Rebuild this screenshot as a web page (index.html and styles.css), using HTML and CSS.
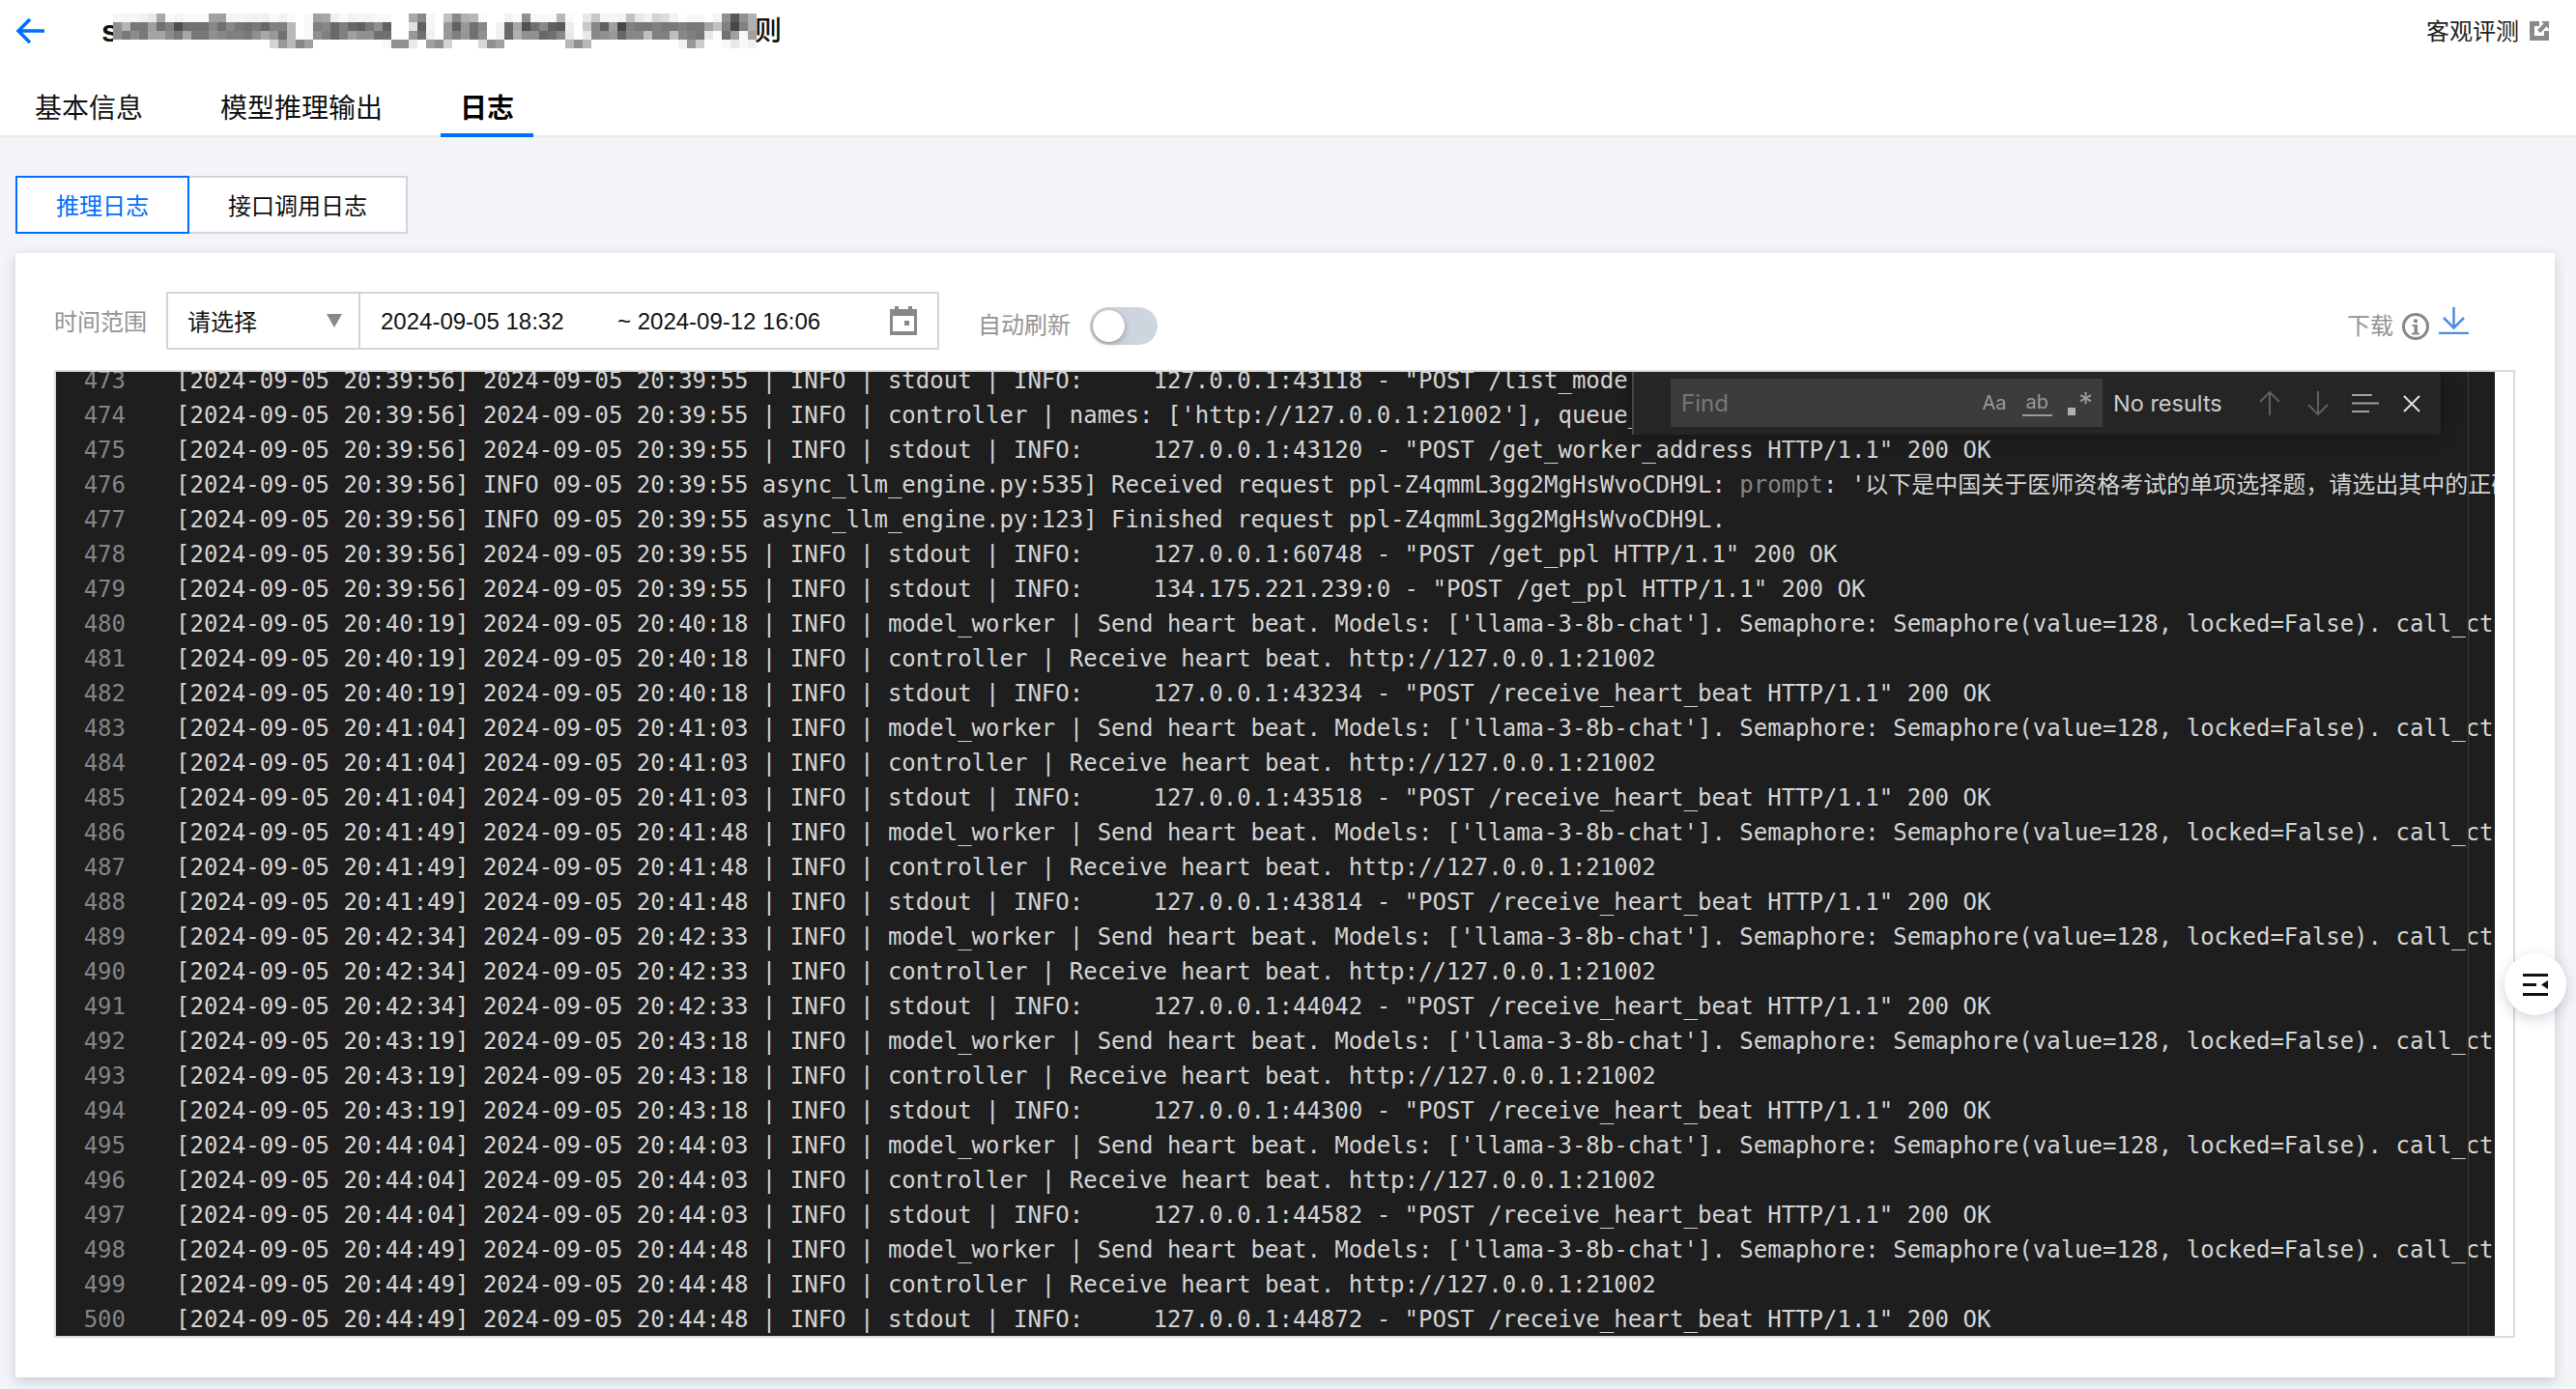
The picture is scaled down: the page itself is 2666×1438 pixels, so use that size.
FILE: index.html
```html
<!DOCTYPE html>
<html lang="zh">
<head>
<meta charset="utf-8">
<title>日志</title>
<link rel="stylesheet" href="styles.css">
</head>
<body>
<header class="header">
  <div class="topbar">
    <svg class="back" width="30" height="28" viewBox="0 0 30 28"><path d="M15 2 3 14l12 12M3 14h27" fill="none" stroke="#006eff" stroke-width="3.5"/></svg>
    <div class="title"><span class="title-s">s</span><svg class="mosaic" width="666" height="36" viewBox="0 0 666 36">
      <g>
      <rect x="0" y="0" fill="#f6f6f6"/><rect x="9" y="0" fill="#f6f6f6"/><rect x="18" y="0" fill="#f6f6f6"/><rect x="27" y="0" fill="#f0f0f0"/><rect x="36" y="0" fill="#e8e8e8"/><rect x="45" y="0" fill="#a8a8a8"/><rect x="54" y="0" fill="#fafafa"/><rect x="63" y="0" fill="#f5f5f5"/><rect x="72" y="0" fill="#f8f8f8"/><rect x="81" y="0" fill="#f8f8f8"/><rect x="90" y="0" fill="#f8f8f8"/><rect x="99" y="0" fill="#a0a0a0"/><rect x="108" y="0" fill="#a0a0a0"/><rect x="117" y="0" fill="#f5f5f5"/><rect x="126" y="0" fill="#f5f5f5"/><rect x="135" y="0" fill="#f2f2f2"/><rect x="144" y="0" fill="#f2f2f2"/><rect x="153" y="0" fill="#f0f0f0"/><rect x="162" y="0" fill="#fafafa"/><rect x="171" y="0" fill="#f2f2f2"/><rect x="180" y="0" fill="#fafafa"/><rect x="198" y="0" fill="#f8f8f8"/><rect x="207" y="0" fill="#a0a0a0"/><rect x="216" y="0" fill="#a8a8a8"/><rect x="225" y="0" fill="#f0f0f0"/><rect x="234" y="0" fill="#fafafa"/><rect x="243" y="0" fill="#f2f2f2"/><rect x="252" y="0" fill="#f5f5f5"/><rect x="261" y="0" fill="#f5f5f5"/><rect x="270" y="0" fill="#f8f8f8"/><rect x="279" y="0" fill="#f8f8f8"/><rect x="306" y="0" fill="#a8a8a8"/><rect x="315" y="0" fill="#888888"/><rect x="324" y="0" fill="#f8f8f8"/><rect x="342" y="0" fill="#c0c0c0"/><rect x="351" y="0" fill="#888888"/><rect x="360" y="0" fill="#b0b0b0"/><rect x="369" y="0" fill="#b8b8b8"/><rect x="378" y="0" fill="#fafafa"/><rect x="405" y="0" fill="#f2f2f2"/><rect x="414" y="0" fill="#fafafa"/><rect x="423" y="0" fill="#909090"/><rect x="432" y="0" fill="#f8f8f8"/><rect x="441" y="0" fill="#f8f8f8"/><rect x="450" y="0" fill="#f8f8f8"/><rect x="459" y="0" fill="#b8b8b8"/><rect x="468" y="0" fill="#fafafa"/><rect x="486" y="0" fill="#e8e8e8"/><rect x="495" y="0" fill="#c8c8c8"/><rect x="504" y="0" fill="#f5f5f5"/><rect x="513" y="0" fill="#f5f5f5"/><rect x="522" y="0" fill="#f2f2f2"/><rect x="531" y="0" fill="#c0c0c0"/><rect x="540" y="0" fill="#e8e8e8"/><rect x="549" y="0" fill="#f2f2f2"/><rect x="558" y="0" fill="#d4d4d4"/><rect x="567" y="0" fill="#dcdcdc"/><rect x="576" y="0" fill="#f2f2f2"/><rect x="594" y="0" fill="#f8f8f8"/><rect x="603" y="0" fill="#f8f8f8"/><rect x="621" y="0" fill="#f5f5f5"/><rect x="630" y="0" fill="#909090"/><rect x="639" y="0" fill="#585858"/><rect x="648" y="0" fill="#909090"/><rect x="657" y="0" fill="#b0b0b0"/>
      </g>
      <g>
      <rect x="0" y="9" fill="#909090"/><rect x="9" y="9" fill="#b4b4b4"/><rect x="18" y="9" fill="#787878"/><rect x="27" y="9" fill="#787878"/><rect x="36" y="9" fill="#a0a0a0"/><rect x="45" y="9" fill="#707070"/><rect x="54" y="9" fill="#808080"/><rect x="63" y="9" fill="#505050"/><rect x="72" y="9" fill="#707070"/><rect x="81" y="9" fill="#707070"/><rect x="90" y="9" fill="#707070"/><rect x="99" y="9" fill="#888888"/><rect x="108" y="9" fill="#707070"/><rect x="117" y="9" fill="#888888"/><rect x="126" y="9" fill="#787878"/><rect x="135" y="9" fill="#707070"/><rect x="144" y="9" fill="#787878"/><rect x="153" y="9" fill="#686868"/><rect x="162" y="9" fill="#808080"/><rect x="171" y="9" fill="#808080"/><rect x="180" y="9" fill="#b8b8b8"/><rect x="198" y="9" fill="#f8f8f8"/><rect x="207" y="9" fill="#808080"/><rect x="216" y="9" fill="#888888"/><rect x="225" y="9" fill="#686868"/><rect x="234" y="9" fill="#808080"/><rect x="243" y="9" fill="#686868"/><rect x="252" y="9" fill="#606060"/><rect x="261" y="9" fill="#787878"/><rect x="270" y="9" fill="#909090"/><rect x="279" y="9" fill="#606060"/><rect x="306" y="9" fill="#e0e0e0"/><rect x="315" y="9" fill="#606060"/><rect x="324" y="9" fill="#f5f5f5"/><rect x="342" y="9" fill="#989898"/><rect x="351" y="9" fill="#606060"/><rect x="360" y="9" fill="#989898"/><rect x="369" y="9" fill="#707070"/><rect x="378" y="9" fill="#888888"/><rect x="396" y="9" fill="#f2f2f2"/><rect x="405" y="9" fill="#686868"/><rect x="414" y="9" fill="#a8a8a8"/><rect x="423" y="9" fill="#505050"/><rect x="432" y="9" fill="#707070"/><rect x="441" y="9" fill="#888888"/><rect x="450" y="9" fill="#606060"/><rect x="459" y="9" fill="#585858"/><rect x="468" y="9" fill="#eeeeee"/><rect x="486" y="9" fill="#c8c8c8"/><rect x="495" y="9" fill="#888888"/><rect x="504" y="9" fill="#606060"/><rect x="513" y="9" fill="#a0a0a0"/><rect x="522" y="9" fill="#484848"/><rect x="531" y="9" fill="#808080"/><rect x="540" y="9" fill="#787878"/><rect x="549" y="9" fill="#787878"/><rect x="558" y="9" fill="#808080"/><rect x="567" y="9" fill="#787878"/><rect x="576" y="9" fill="#787878"/><rect x="585" y="9" fill="#808080"/><rect x="594" y="9" fill="#787878"/><rect x="603" y="9" fill="#787878"/><rect x="612" y="9" fill="#a4a4a4"/><rect x="621" y="9" fill="#c0c0c0"/><rect x="630" y="9" fill="#808080"/><rect x="639" y="9" fill="#484848"/><rect x="648" y="9" fill="#808080"/><rect x="657" y="9" fill="#b0b0b0"/>
      </g>
      <g>
      <rect x="0" y="18" fill="#909090"/><rect x="9" y="18" fill="#787878"/><rect x="18" y="18" fill="#8c8c8c"/><rect x="27" y="18" fill="#787878"/><rect x="36" y="18" fill="#a4a4a4"/><rect x="45" y="18" fill="#a4a4a4"/><rect x="54" y="18" fill="#8c8c8c"/><rect x="63" y="18" fill="#787878"/><rect x="72" y="18" fill="#a8a8a8"/><rect x="81" y="18" fill="#787878"/><rect x="90" y="18" fill="#787878"/><rect x="99" y="18" fill="#909090"/><rect x="108" y="18" fill="#888888"/><rect x="117" y="18" fill="#808080"/><rect x="126" y="18" fill="#808080"/><rect x="135" y="18" fill="#787878"/><rect x="144" y="18" fill="#909090"/><rect x="153" y="18" fill="#a8a8a8"/><rect x="162" y="18" fill="#989898"/><rect x="171" y="18" fill="#707070"/><rect x="180" y="18" fill="#b8b8b8"/><rect x="198" y="18" fill="#f8f8f8"/><rect x="207" y="18" fill="#909090"/><rect x="216" y="18" fill="#808080"/><rect x="225" y="18" fill="#686868"/><rect x="234" y="18" fill="#808080"/><rect x="243" y="18" fill="#a0a0a0"/><rect x="252" y="18" fill="#909090"/><rect x="261" y="18" fill="#909090"/><rect x="270" y="18" fill="#707070"/><rect x="279" y="18" fill="#707070"/><rect x="306" y="18" fill="#989898"/><rect x="315" y="18" fill="#707070"/><rect x="324" y="18" fill="#f0f0f0"/><rect x="342" y="18" fill="#989898"/><rect x="351" y="18" fill="#808080"/><rect x="360" y="18" fill="#989898"/><rect x="369" y="18" fill="#707070"/><rect x="378" y="18" fill="#909090"/><rect x="396" y="18" fill="#f2f2f2"/><rect x="405" y="18" fill="#686868"/><rect x="414" y="18" fill="#b0b0b0"/><rect x="423" y="18" fill="#909090"/><rect x="432" y="18" fill="#909090"/><rect x="441" y="18" fill="#686868"/><rect x="450" y="18" fill="#707070"/><rect x="459" y="18" fill="#888888"/><rect x="468" y="18" fill="#e8e8e8"/><rect x="486" y="18" fill="#e8e8e8"/><rect x="495" y="18" fill="#888888"/><rect x="504" y="18" fill="#909090"/><rect x="513" y="18" fill="#989898"/><rect x="522" y="18" fill="#686868"/><rect x="531" y="18" fill="#888888"/><rect x="540" y="18" fill="#888888"/><rect x="549" y="18" fill="#c0c0c0"/><rect x="558" y="18" fill="#808080"/><rect x="567" y="18" fill="#808080"/><rect x="576" y="18" fill="#c0c0c0"/><rect x="585" y="18" fill="#888888"/><rect x="594" y="18" fill="#808080"/><rect x="603" y="18" fill="#787878"/><rect x="612" y="18" fill="#e8e8e8"/><rect x="621" y="18" fill="#fafafa"/><rect x="630" y="18" fill="#707070"/><rect x="639" y="18" fill="#a0a0a0"/><rect x="648" y="18" fill="#f8f8f8"/><rect x="657" y="18" fill="#a0a0a0"/>
      </g>
      <g>
      <rect x="162" y="27" fill="#d4d4d4"/><rect x="171" y="27" fill="#989898"/><rect x="180" y="27" fill="#b8b8b8"/><rect x="189" y="27" fill="#888888"/><rect x="198" y="27" fill="#a0a0a0"/><rect x="279" y="27" fill="#f8f8f8"/><rect x="288" y="27" fill="#909090"/><rect x="297" y="27" fill="#909090"/><rect x="306" y="27" fill="#e8e8e8"/><rect x="324" y="27" fill="#a0a0a0"/><rect x="333" y="27" fill="#909090"/><rect x="342" y="27" fill="#d4d4d4"/><rect x="378" y="27" fill="#d8d8d8"/><rect x="387" y="27" fill="#909090"/><rect x="396" y="27" fill="#a0a0a0"/><rect x="468" y="27" fill="#b8b8b8"/><rect x="477" y="27" fill="#909090"/><rect x="486" y="27" fill="#b8b8b8"/><rect x="585" y="27" fill="#f2f2f2"/><rect x="594" y="27" fill="#989898"/><rect x="603" y="27" fill="#cccccc"/><rect x="630" y="27" fill="#f8f8f8"/><rect x="639" y="27" fill="#e8e8e8"/><rect x="648" y="27" fill="#f8f8f8"/><rect x="657" y="27" fill="#f0f0f0"/>
      </g>
    </svg><span class="title-end">则</span></div>
    <a class="eval"><span class="eval-text">客观评测</span><svg class="eval-icon" width="20" height="20" viewBox="0 0 20 20"><path d="M0 0H10V5H5V15H15V10H20V20H0Z M12 0H20V8L17.500 5.500 11 12 8 9 14.500 2.500Z" fill="#8a8a8a"/></svg></a>
  </div>
  <nav class="tabs">
    <span class="tab">基本信息</span>
    <span class="tab">模型推理输出</span>
    <span class="tab tab-active">日志</span>
  </nav>
</header>

<main class="main">
  <div class="switch">
    <button class="sw sw-active">推理日志</button>
    <button class="sw">接口调用日志</button>
  </div>

  <section class="card">
    <div class="filters">
      <span class="lbl lbl-range">时间范围</span>
      <div class="select"><span class="select-text">请选择</span><i class="caret"></i></div>
      <div class="date">
        <span class="d1">2024-09-05 18:32</span>
        <span class="d2">~ 2024-09-12 16:06</span>
        <svg class="cal" width="28" height="30" viewBox="0 0 28 30"><path d="M0 3H5V0H9V3H19V0H23V3H28V30H0ZM3 10V26H25V10Z" fill="#888" fill-rule="evenodd"/><rect x="15" y="15" width="5" height="5" fill="#888"/></svg>
      </div>
      <div class="auto">
        <span class="lbl">自动刷新</span>
        <span class="toggle"><i class="knob"></i></span>
      </div>
      <div class="dl">
        <span class="lbl">下载</span>
        <svg class="info" width="28" height="28" viewBox="0 0 28 28"><circle cx="14" cy="14" r="12.500" fill="none" stroke="#888" stroke-width="3"/><path d="M12 6.500h4v3.500h-4zM10.500 12h5.500v8.500h2v2h-8v-2h2.500v-6.500h-2z" fill="#888"/></svg>
        <svg class="down" width="31" height="28" viewBox="0 0 31 28"><path d="M15.500 0V21M5 11 15.500 21.500 26 11" fill="none" stroke="#4a8be8" stroke-width="2.500"/><path d="M0 27H31" stroke="#4a8be8" stroke-width="2.500"/></svg>
      </div>
    </div>

    <div class="logframe">
      <div class="editor">
        <div class="lines">
<div class="line"><span class="ln">473</span><span class="code">[2024-09-05 20:39:56] 2024-09-05 20:39:55 | INFO | stdout | INFO:     127.0.0.1:43118 - "POST /list_models HTTP/1.1" 200 OK</span></div>
<div class="line"><span class="ln">474</span><span class="code">[2024-09-05 20:39:56] 2024-09-05 20:39:55 | INFO | controller | names: ['http://127.0.0.1:21002'], queue_lengths: [0]</span></div>
<div class="line"><span class="ln">475</span><span class="code">[2024-09-05 20:39:56] 2024-09-05 20:39:55 | INFO | stdout | INFO:     127.0.0.1:43120 - "POST /get_worker_address HTTP/1.1" 200 OK</span></div>
<div class="line"><span class="ln">476</span><span class="code">[2024-09-05 20:39:56] INFO 09-05 20:39:55 async_llm_engine.py:535] Received request ppl-Z4qmmL3gg2MgHsWvoCDH9L: <span class="dim">prompt</span>: '以下是中国关于医师资格考试的单项选择题，请选出其中的正确答案。</span></div>
<div class="line"><span class="ln">477</span><span class="code">[2024-09-05 20:39:56] INFO 09-05 20:39:55 async_llm_engine.py:123] Finished request ppl-Z4qmmL3gg2MgHsWvoCDH9L.</span></div>
<div class="line"><span class="ln">478</span><span class="code">[2024-09-05 20:39:56] 2024-09-05 20:39:55 | INFO | stdout | INFO:     127.0.0.1:60748 - "POST /get_ppl HTTP/1.1" 200 OK</span></div>
<div class="line"><span class="ln">479</span><span class="code">[2024-09-05 20:39:56] 2024-09-05 20:39:55 | INFO | stdout | INFO:     134.175.221.239:0 - "POST /get_ppl HTTP/1.1" 200 OK</span></div>
<div class="line"><span class="ln">480</span><span class="code">[2024-09-05 20:40:19] 2024-09-05 20:40:18 | INFO | model_worker | Send heart beat. Models: ['llama-3-8b-chat']. Semaphore: Semaphore(value=128, locked=False). call_ct: 1</span></div>
<div class="line"><span class="ln">481</span><span class="code">[2024-09-05 20:40:19] 2024-09-05 20:40:18 | INFO | controller | Receive heart beat. http://127.0.0.1:21002</span></div>
<div class="line"><span class="ln">482</span><span class="code">[2024-09-05 20:40:19] 2024-09-05 20:40:18 | INFO | stdout | INFO:     127.0.0.1:43234 - "POST /receive_heart_beat HTTP/1.1" 200 OK</span></div>
<div class="line"><span class="ln">483</span><span class="code">[2024-09-05 20:41:04] 2024-09-05 20:41:03 | INFO | model_worker | Send heart beat. Models: ['llama-3-8b-chat']. Semaphore: Semaphore(value=128, locked=False). call_ct: 1</span></div>
<div class="line"><span class="ln">484</span><span class="code">[2024-09-05 20:41:04] 2024-09-05 20:41:03 | INFO | controller | Receive heart beat. http://127.0.0.1:21002</span></div>
<div class="line"><span class="ln">485</span><span class="code">[2024-09-05 20:41:04] 2024-09-05 20:41:03 | INFO | stdout | INFO:     127.0.0.1:43518 - "POST /receive_heart_beat HTTP/1.1" 200 OK</span></div>
<div class="line"><span class="ln">486</span><span class="code">[2024-09-05 20:41:49] 2024-09-05 20:41:48 | INFO | model_worker | Send heart beat. Models: ['llama-3-8b-chat']. Semaphore: Semaphore(value=128, locked=False). call_ct: 1</span></div>
<div class="line"><span class="ln">487</span><span class="code">[2024-09-05 20:41:49] 2024-09-05 20:41:48 | INFO | controller | Receive heart beat. http://127.0.0.1:21002</span></div>
<div class="line"><span class="ln">488</span><span class="code">[2024-09-05 20:41:49] 2024-09-05 20:41:48 | INFO | stdout | INFO:     127.0.0.1:43814 - "POST /receive_heart_beat HTTP/1.1" 200 OK</span></div>
<div class="line"><span class="ln">489</span><span class="code">[2024-09-05 20:42:34] 2024-09-05 20:42:33 | INFO | model_worker | Send heart beat. Models: ['llama-3-8b-chat']. Semaphore: Semaphore(value=128, locked=False). call_ct: 1</span></div>
<div class="line"><span class="ln">490</span><span class="code">[2024-09-05 20:42:34] 2024-09-05 20:42:33 | INFO | controller | Receive heart beat. http://127.0.0.1:21002</span></div>
<div class="line"><span class="ln">491</span><span class="code">[2024-09-05 20:42:34] 2024-09-05 20:42:33 | INFO | stdout | INFO:     127.0.0.1:44042 - "POST /receive_heart_beat HTTP/1.1" 200 OK</span></div>
<div class="line"><span class="ln">492</span><span class="code">[2024-09-05 20:43:19] 2024-09-05 20:43:18 | INFO | model_worker | Send heart beat. Models: ['llama-3-8b-chat']. Semaphore: Semaphore(value=128, locked=False). call_ct: 1</span></div>
<div class="line"><span class="ln">493</span><span class="code">[2024-09-05 20:43:19] 2024-09-05 20:43:18 | INFO | controller | Receive heart beat. http://127.0.0.1:21002</span></div>
<div class="line"><span class="ln">494</span><span class="code">[2024-09-05 20:43:19] 2024-09-05 20:43:18 | INFO | stdout | INFO:     127.0.0.1:44300 - "POST /receive_heart_beat HTTP/1.1" 200 OK</span></div>
<div class="line"><span class="ln">495</span><span class="code">[2024-09-05 20:44:04] 2024-09-05 20:44:03 | INFO | model_worker | Send heart beat. Models: ['llama-3-8b-chat']. Semaphore: Semaphore(value=128, locked=False). call_ct: 1</span></div>
<div class="line"><span class="ln">496</span><span class="code">[2024-09-05 20:44:04] 2024-09-05 20:44:03 | INFO | controller | Receive heart beat. http://127.0.0.1:21002</span></div>
<div class="line"><span class="ln">497</span><span class="code">[2024-09-05 20:44:04] 2024-09-05 20:44:03 | INFO | stdout | INFO:     127.0.0.1:44582 - "POST /receive_heart_beat HTTP/1.1" 200 OK</span></div>
<div class="line"><span class="ln">498</span><span class="code">[2024-09-05 20:44:49] 2024-09-05 20:44:48 | INFO | model_worker | Send heart beat. Models: ['llama-3-8b-chat']. Semaphore: Semaphore(value=128, locked=False). call_ct: 1</span></div>
<div class="line"><span class="ln">499</span><span class="code">[2024-09-05 20:44:49] 2024-09-05 20:44:48 | INFO | controller | Receive heart beat. http://127.0.0.1:21002</span></div>
<div class="line"><span class="ln">500</span><span class="code">[2024-09-05 20:44:49] 2024-09-05 20:44:48 | INFO | stdout | INFO:     127.0.0.1:44872 - "POST /receive_heart_beat HTTP/1.1" 200 OK</span></div>
        </div>
        <i class="ruler"></i>
        <div class="find">
          <div class="find-input">
            <span class="find-ph">Find</span>
            <span class="opt opt-aa">Aa</span>
            <span class="opt opt-ab">ab</span>
            <span class="opt opt-re"><i class="re-dot"></i>*</span>
          </div>
          <span class="find-status">No results</span>
          <svg class="find-btn" width="22" height="25" viewBox="0 0 22 25"><path d="M11 1V25M1 11 11 1 21 11" fill="none" stroke="#5f5f5f" stroke-width="2"/></svg>
          <svg class="find-btn" width="22" height="25" viewBox="0 0 22 25"><path d="M11 0V24M1 14 11 24 21 14" fill="none" stroke="#5f5f5f" stroke-width="2"/></svg>
          <svg class="find-btn find-list" width="28" height="20" viewBox="0 0 28 20"><path d="M0 1H21M0 9.500H28M0 18H18" stroke="#a0a0a0" stroke-width="2"/></svg>
          <svg class="find-btn" width="18" height="18" viewBox="0 0 18 18"><path d="M1 1 17 17M17 1 1 17" stroke="#e0e0e0" stroke-width="2"/></svg>
        </div>
      </div>
    </div>
  </section>
</main>

<button class="side">
  <svg width="26" height="23" viewBox="0 0 26 23"><path d="M0 0H26V3H0ZM0 20H26V23H0ZM0 10H14V13H0ZM26 7V16L19 11.500Z" fill="#111"/></svg>
</button>
</body>
</html>
```

FILE: styles.css
```css
html, body {
  margin: 0;
  padding: 0;
}
body {
  position: relative;
  width: 2666px;
  height: 1438px;
  overflow: hidden;
  background: #f2f4f8;
  color: #111;
  font-family: "Liberation Sans", "Noto Sans CJK SC", sans-serif;
  font-size: 24px;
}

/* header */
.header {
  height: 140px;
  background: #fff;
  border-bottom: 2px solid #e7eaef;
}
.topbar {
  height: 64px;
  display: flex;
  align-items: center;
  padding: 0 28px 0 16px;
}
.back { flex: none; }
.title {
  display: flex;
  align-items: flex-start;
  margin-left: 59px;
  height: 36px;
  font-size: 28px;
  font-weight: 500;
  line-height: 36px;
}
.title-s {
  width: 12px;
  overflow: hidden;
  font-weight: 700;
  font-size: 32px;
}
.mosaic { display: block; }
.mosaic rect { width: 9px; height: 9px; }
.title-end {
  margin-left: -2px;
  font-size: 28px;
  font-weight: 500;
  line-height: 38px;
}
.eval {
  margin-left: auto;
  display: flex;
  align-items: center;
  color: #222;
  font-size: 24px;
}
.eval-text { padding-bottom: 3px; }
.eval-icon { margin-left: 11px; }

.tabs {
  display: flex;
  gap: 40px;
  padding-left: 16px;
  height: 78px;
}
.tab {
  padding: 0 20px;
  height: 78px;
  line-height: 98px;
  box-sizing: border-box;
  font-size: 28px;
  color: #111;
}
.tab-active {
  font-weight: 700;
  color: #000;
  border-bottom: 4px solid #006eff;
}

/* main */
.main { padding: 40px 22px 0 16px; }
.switch { display: flex; margin-bottom: 20px; }
.sw {
  height: 60px;
  padding: 0 40px 2px;
  border: 2px solid #cfd5de;
  background: #fff;
  color: #111;
  font: inherit;
  margin-left: -2px;
}
.sw-active {
  position: relative;
  margin-left: 0;
  padding: 0 40px 2px;
  border-color: #006eff;
  color: #006eff;
}

.card {
  height: 1164px;
  box-sizing: border-box;
  padding: 40px 41px 41px 40px;
  background: #fff;
  box-shadow: 0 4px 12px rgba(54, 58, 80, .22);
}
.filters {
  display: flex;
  align-items: flex-start;
  height: 60px;
  margin-bottom: 21px;
}
.lbl { color: #949494; line-height: 60px; }
.lbl-range { padding-top: 2px; }
.select {
  display: flex;
  align-items: center;
  justify-content: space-between;
  box-sizing: border-box;
  width: 201px;
  height: 60px;
  margin-left: 20px;
  padding: 0 17px 0 20px;
  border: 2px solid #cfd5de;
}
.select-text { padding-bottom: 2px; }
.caret {
  width: 0;
  height: 0;
  border-left: 8px solid transparent;
  border-right: 8px solid transparent;
  border-top: 14px solid #888;
}
.date {
  display: flex;
  align-items: center;
  box-sizing: border-box;
  width: 601px;
  height: 60px;
  margin-left: -2px;
  padding: 0 21px 0 21px;
  border: 2px solid #cfd5de;
}
.d1, .d2 { padding-top: 2px; }
.d1 { width: 245px; }
.cal { margin-left: auto; }
.auto {
  display: flex;
  align-items: center;
  margin: 5px 0 0 40px;
  height: 60px;
}
.toggle {
  position: relative;
  display: block;
  width: 70px;
  height: 39px;
  margin-left: 20px;
  border-radius: 20px;
  background: #cfd5de;
}
.knob {
  position: absolute;
  left: 3px;
  top: 3px;
  width: 33px;
  height: 33px;
  border-radius: 50%;
  background: #fff;
  box-shadow: -1px 1px 4px rgba(0, 0, 0, .25), 3px 3px 6px rgba(0, 0, 0, .1);
}
.dl {
  display: flex;
  align-items: center;
  margin: 6px 48px 0 auto;
  height: 60px;
}
.info { margin-left: 9px; }
.down { margin: -12px 0 0 10px; }

/* log */
.logframe {
  height: 1002px;
  border: 2px solid #dcdcdc;
  box-sizing: border-box;
  padding-right: 19px;
}
.editor {
  position: relative;
  height: 998px;
  background: #1e1e1e;
  overflow: hidden;
  display: flex;
  flex-direction: column;
  justify-content: flex-end;
  font-family: "DejaVu Sans Mono", "Noto Sans CJK SC", monospace;
  color: #d4d4d4;
}
.lines { flex: none; }
.line {
  display: flex;
  height: 36px;
  line-height: 38px;
  white-space: pre;
}
.ln {
  flex: none;
  width: 72px;
  text-align: right;
  color: #858585;
}
.code { flex: none; margin-left: 52px; }
.dim { color: #858585; }
.ruler {
  position: absolute;
  top: 0;
  bottom: 0;
  left: 2496px;
  width: 1px;
  background: #3f3f3f;
}

/* find widget */
.find {
  position: absolute;
  top: 0;
  left: 1631px;
  width: 837px;
  height: 65px;
  display: flex;
  align-items: center;
  box-sizing: border-box;
  padding-left: 38px;
  background: #252526;
  border-left: 2px solid #454545;
  box-shadow: 0 0 16px rgba(0, 0, 0, .36);
  font-family: "Inter", "Liberation Sans", sans-serif;
}
.find-input {
  flex: none;
  display: flex;
  align-items: center;
  box-sizing: border-box;
  width: 447px;
  height: 50px;
  margin-bottom: 1px;
  padding: 0 10px 0 11px;
  background: #3c3c3c;
  color: #999;
}
.find-ph { margin-right: auto; color: #777; font-size: 24px; }
.opt { color: #999; font-size: 20px; }
.opt-ab {
  margin-left: 16px;
  padding: 0 4px;
  border-bottom: 2px solid #999;
  line-height: 26px;
}
.opt-re {
  position: relative;
  box-sizing: border-box;
  margin-left: 16px;
  width: 26px;
  height: 26px;
  text-align: right;
  font-size: 30px;
  line-height: 26px;
}
.re-dot { position: absolute; left: 0; bottom: 0; width: 8px; height: 8px; background: #b0b0b0; }
.find-status { flex: none; margin-left: 11px; width: 151px; color: #ccc; font-size: 23.500px; white-space: nowrap; }
.find-btn { flex: none; margin-right: 28px; }
.find-list { margin-right: 25px; margin-left: -4px; }

/* side button */
.side {
  position: absolute;
  left: 2592px;
  top: 987px;
  width: 64px;
  height: 64px;
  border: 0;
  border-radius: 50%;
  padding: 0;
  display: flex;
  align-items: center;
  justify-content: center;
  background: #fff;
  box-shadow: 0 4px 14px rgba(54, 58, 80, .22);
}
```
